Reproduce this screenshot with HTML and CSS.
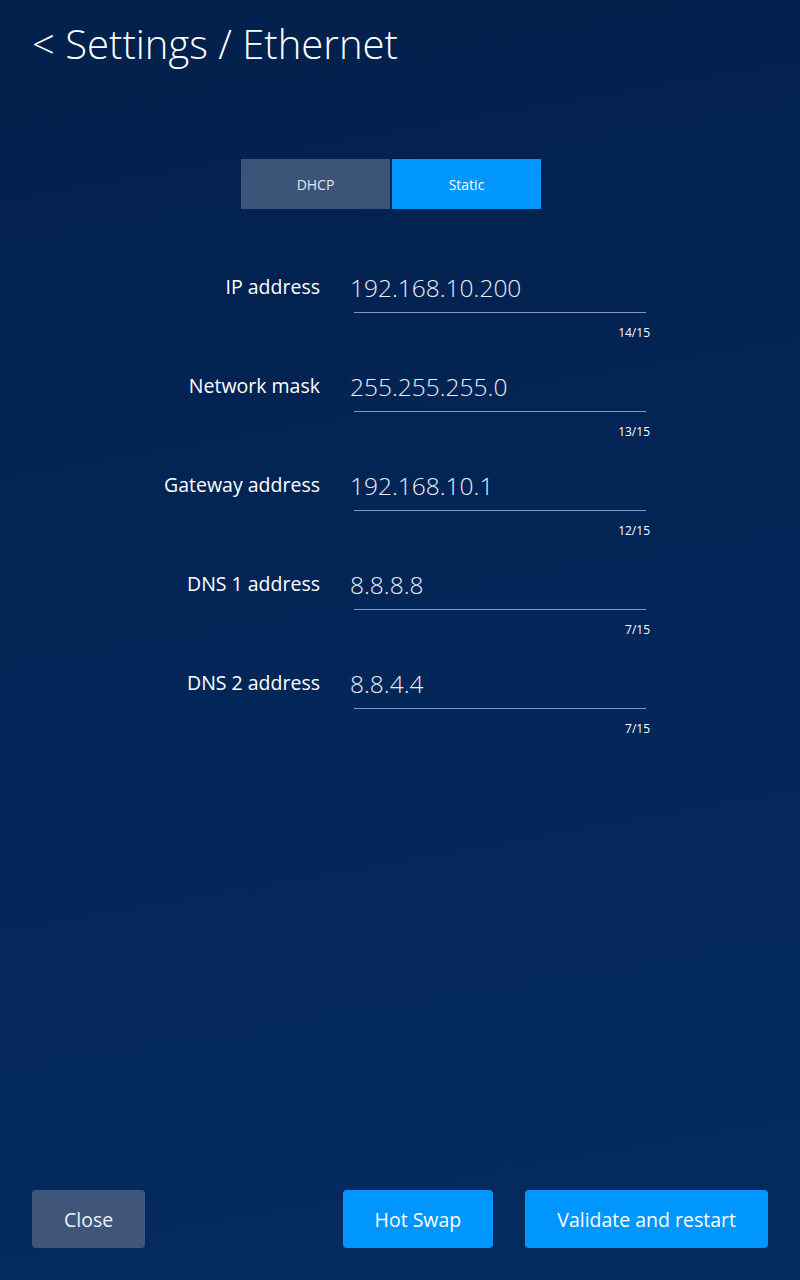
FILE: index.html
```html
<!DOCTYPE html>
<html lang="en">
<head>
<meta charset="utf-8">
<title>Settings / Ethernet</title>
<link rel="stylesheet" href="styles.css">
</head>
<body>
<div class="page">
  <h1 class="title">&lt; Settings / Ethernet</h1>

  <div class="segmented">
    <button class="seg seg-off">DHCP</button>
    <button class="seg seg-on">Static</button>
  </div>

  <div class="form">
    <div class="row">
      <div class="label">IP address</div>
      <div class="field">
        <div class="value">192.168.10.200</div>
        <div class="counter">14/15</div>
      </div>
    </div>
    <div class="row">
      <div class="label">Network mask</div>
      <div class="field">
        <div class="value">255.255.255.0</div>
        <div class="counter">13/15</div>
      </div>
    </div>
    <div class="row">
      <div class="label">Gateway address</div>
      <div class="field">
        <div class="value">192.168.10.1</div>
        <div class="counter">12/15</div>
      </div>
    </div>
    <div class="row">
      <div class="label">DNS 1 address</div>
      <div class="field">
        <div class="value">8.8.8.8</div>
        <div class="counter">7/15</div>
      </div>
    </div>
    <div class="row">
      <div class="label">DNS 2 address</div>
      <div class="field">
        <div class="value">8.8.4.4</div>
        <div class="counter">7/15</div>
      </div>
    </div>
  </div>

  <div class="footer">
    <button class="btn btn-grey">Close</button>
    <div class="footer-right">
      <button class="btn btn-blue">Hot Swap</button>
      <button class="btn btn-blue">Validate and restart</button>
    </div>
  </div>
</div>
</body>
</html>
```

FILE: styles.css
```css
html, body {
  margin: 0;
  padding: 0;
}

body {
  background: linear-gradient(170deg, #02204b 0%, #03275a 60%, #052b5e 100%);
  color: #ffffff;
  font-family: "Open Sans", "Noto Sans", sans-serif;
}

.page {
  display: flex;
  flex-direction: column;
  min-height: 1280px;
  box-sizing: border-box;
}

.title {
  margin: 0;
  padding: 17px 0 0 32px;
  font-size: 40px;
  line-height: 54px;
  font-weight: 300;
  color: #ffffff;
}

.segmented {
  display: flex;
  gap: 2px;
  margin: 88px 0 0 241px;
}

.seg {
  width: 149px;
  height: 50px;
  border: none;
  margin: 0;
  padding: 0;
  font-family: "Open Sans", "Noto Sans", sans-serif;
  font-size: 14px;
  color: #ffffff;
}

.seg-off {
  background: #3d5479;
  color: #e4e9f1;
}

.seg-on {
  background: #0096fd;
}

.form {
  display: flex;
  flex-direction: column;
  gap: 30px;
  margin-top: 63px;
}

.row {
  display: grid;
  grid-template-columns: 320px 300px;
  column-gap: 30px;
  align-items: start;
}

.label {
  text-align: right;
  font-size: 19.5px;
  line-height: 24px;
  padding-top: 3px;
  color: #ffffff;
}

.field {
  display: flex;
  flex-direction: column;
}

.value {
  font-size: 24.5px;
  line-height: 32px;
  font-weight: 300;
  color: #e8eef7;
  padding-bottom: 9px;
  background-image: linear-gradient(#7f9ac2, #7f9ac2);
  background-repeat: no-repeat;
  background-size: calc(100% - 8px) 1px;
  background-position: 4px 100%;
}

.counter {
  margin-top: 12px;
  text-align: right;
  font-size: 12px;
  line-height: 16px;
  color: #ffffff;
}

.footer {
  margin-top: auto;
  display: flex;
  justify-content: space-between;
  align-items: center;
  padding: 0 32px 32px 32px;
}

.footer-right {
  display: flex;
  gap: 32px;
}

.btn {
  height: 58px;
  border: none;
  border-radius: 4px;
  padding: 0 32px;
  margin: 0;
  font-family: "Open Sans", "Noto Sans", sans-serif;
  font-size: 19.5px;
  color: #ffffff;
}

.btn-grey {
  background: #3f5579;
  color: #eef1f6;
}

.btn-blue {
  background: #0096fd;
}
```
